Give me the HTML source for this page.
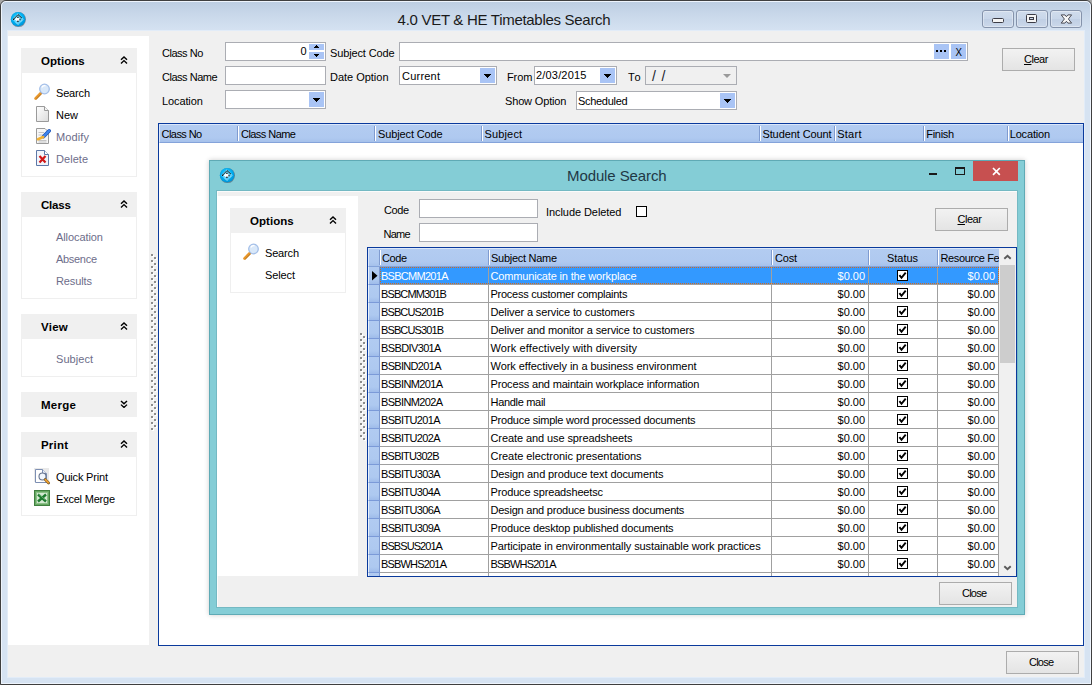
<!DOCTYPE html>
<html>
<head>
<meta charset="utf-8">
<title>4.0 VET &amp; HE Timetables Search</title>
<style>
*{box-sizing:border-box;margin:0;padding:0}
html,body{width:1092px;height:685px;overflow:hidden;background:#a8a8a8;font-family:"Liberation Sans",sans-serif;font-size:11px;color:#000}
.a{position:absolute}
.t{position:absolute;white-space:nowrap;line-height:14px;height:14px}
#win{left:0;top:0;width:1092px;height:685px;border:1px solid #3f3f3f;border-radius:6px 6px 0 0;background:linear-gradient(#bccde1 0,#c9d8ea 14px,#d6e3f2 31px,#d6e3f2 100%)}
#winhl{left:1px;top:1px;width:1090px;height:683px;border:1px solid #eef4fc;border-radius:5px 5px 0 0}
.cap{position:absolute;top:10px;height:18px;width:32px;border:1px solid #8593ab;border-radius:3px;background:linear-gradient(#d0dcec 0,#c8d6e9 50%,#c0cfe4 51%,#cbd8ea 100%);box-shadow:inset 0 0 0 1px rgba(255,255,255,.35)}
#client{left:8px;top:31px;width:1076px;height:646px;background:#f0f0f0;box-shadow:0 0 0 1px #e2ecf8}
.side{background:#fff}
.hd{position:absolute;background:#f0f0f0;height:25px}
.bd{position:absolute;border:1px solid #efefef;border-top:0;background:#fff}
.chev{position:absolute;right:9.2px;top:7.8px;width:8px;height:8.4px}
.dis{color:#6d6d8a}
.in{position:absolute;background:#fff;border:1px solid #abadb3;height:19px}
.dd{position:absolute;top:1px;right:1px;width:15px;height:15px;background:#a9c4f5}
.dd svg{position:absolute;left:4px;top:6px}
.btn{position:absolute;border:1px solid #acacac;background:linear-gradient(#f2f2f2,#e4e4e4);height:23px}
.gh{position:absolute;height:19px;background:linear-gradient(#b3ccf1 0,#afc9f0 13px,#a3bfea 18px);border-top:1px solid #dbe7fa;border-left:1px solid #dbe7fa;border-bottom:1px solid #84a3da}
.sep{position:absolute;top:3px;width:2px;height:15px;border-left:1px solid #7f9bd0;border-right:1px solid #fff}
.r{position:absolute;left:0;width:631px;height:18px}
.ri{position:absolute;left:0;top:0;width:12px;height:18px;background:linear-gradient(#b1cbf1 0,#aec9f0 12px,#9fbcea 17px);border-left:1px solid #e9f1fc;border-bottom:1px solid #7b9ad8;border-right:1px solid #7d99d0}
.c{position:absolute;top:0;height:18px;border-right:1px solid #a0a0a0;border-bottom:1px solid #a0a0a0;overflow:hidden;background:#fff}
.sel .c{background:#3399ff;color:#fff}
</style>
</head>
<body>
<div id="win" class="a"></div><div id="winhl" class="a"></div>
<div class="t" style="left:397.6px;top:13px;letter-spacing:-0.29px;font-size:15px;color:#1a1a1a;line-height:18px;height:18px;margin-top:-2px">4.0 VET &amp; HE Timetables Search</div>
<svg class="a" style="left:10px;top:11px" width="17" height="17" viewBox="0 0 17 17"><defs><radialGradient id="ai1" cx=".45" cy=".4" r=".6"><stop offset="0" stop-color="#3ad2ff"/><stop offset=".65" stop-color="#00aef0"/><stop offset="1" stop-color="#008fd2"/></radialGradient></defs><circle cx="8.5" cy="8.6" r="7.5" fill="#46505e" opacity=".55"/><circle cx="8.1" cy="8.2" r="7.3" fill="url(#ai1)"/><path d="M2.8 8.2 L8 2.8 L13.3 8.2 L8 13.6 Z" fill="rgba(255,255,255,.3)" stroke="rgba(255,255,255,.9)" stroke-width=".9" stroke-dasharray="1 .8"/><path d="M4.6 8.4 L7.8 5.6 L10.4 8.4 L7.8 10.8 Z" fill="#fff"/><path d="M3.4 8.3 L8 3.6 L11.9 7" fill="none" stroke="#111" stroke-width=".95"/><path d="M7 6.2 h1.8 M10 7.8 v1.4 M7 10.3 h1.8 M3.6 7.8 v1.2" stroke="#111" stroke-width="1.1"/></svg>
<div class="cap" style="left:982px"><svg class="a" style="left:9px;top:7px" width="12" height="6"><rect x=".5" y=".5" width="11" height="4" rx="1" fill="#f4f4f4" stroke="#3c3c46"/></svg></div>
<div class="cap" style="left:1016px"><svg class="a" style="left:9px;top:3px" width="11" height="10"><rect x=".5" y=".5" width="10" height="8" rx="1" fill="#f4f4f4" stroke="#3c3c46"/><rect x="3.5" y="3.5" width="4" height="2" fill="#c9d6e8" stroke="#3c3c46"/></svg></div>
<div class="cap" style="left:1050px"><svg class="a" style="left:9px;top:3px" width="13" height="10" viewBox="0 0 13 10"><path d="M1.2 .9 H4.9 L6.4 2.7 L7.9 .9 H11.6 L8.4 5 L11.6 9.1 H7.9 L6.4 7.3 L4.9 9.1 H1.2 L4.4 5 Z" fill="#f6f6f6" stroke="#3c3c46" stroke-width=".9"/></svg></div>
<div id="client" class="a"></div>
<div class="a side" style="left:8px;top:36px;width:141px;height:609px"></div>
<div class="hd" style="left:21px;top:48px;width:116px"><svg class="chev" viewBox="0 0 8 9" preserveAspectRatio="none"><path d="M1 4 L4 1 L7 4 M1 8 L4 5 L7 8" fill="none" stroke="#000" stroke-width="1.4"/></svg></div>
<div class="t" style="left:41px;top:54px;letter-spacing:0.04px;font-size:11.5px;font-weight:bold">Options</div>
<div class="bd" style="left:21px;top:73px;width:116px;height:104px"></div>
<div class="hd" style="left:21px;top:192px;width:116px"><svg class="chev" viewBox="0 0 8 9" preserveAspectRatio="none"><path d="M1 4 L4 1 L7 4 M1 8 L4 5 L7 8" fill="none" stroke="#000" stroke-width="1.4"/></svg></div>
<div class="t" style="left:41px;top:198px;letter-spacing:-0.22px;font-size:11.5px;font-weight:bold">Class</div>
<div class="bd" style="left:21px;top:217px;width:116px;height:82px"></div>
<div class="hd" style="left:21px;top:314px;width:116px"><svg class="chev" viewBox="0 0 8 9" preserveAspectRatio="none"><path d="M1 4 L4 1 L7 4 M1 8 L4 5 L7 8" fill="none" stroke="#000" stroke-width="1.4"/></svg></div>
<div class="t" style="left:41px;top:320px;letter-spacing:0.27px;font-size:11.5px;font-weight:bold">View</div>
<div class="bd" style="left:21px;top:339px;width:116px;height:38px"></div>
<div class="hd" style="left:21px;top:392px;width:116px"><svg class="chev" viewBox="0 0 8 9" preserveAspectRatio="none"><path d="M1 1 L4 4 L7 1 M1 5 L4 8 L7 5" fill="none" stroke="#000" stroke-width="1.4"/></svg></div>
<div class="t" style="left:41px;top:398px;letter-spacing:0.28px;font-size:11.5px;font-weight:bold">Merge</div>
<div class="hd" style="left:21px;top:432px;width:116px"><svg class="chev" viewBox="0 0 8 9" preserveAspectRatio="none"><path d="M1 4 L4 1 L7 4 M1 8 L4 5 L7 8" fill="none" stroke="#000" stroke-width="1.4"/></svg></div>
<div class="t" style="left:41px;top:438px;letter-spacing:0.2px;font-size:11.5px;font-weight:bold">Print</div>
<div class="bd" style="left:21px;top:457px;width:116px;height:59px"></div>
<div class="t" style="left:56px;top:86px;letter-spacing:-0.17px">Search</div>
<svg class="a" style="left:33px;top:83px" width="18" height="18" viewBox="0 0 18 18"><path d="M2.6 15.4 L8.2 9.8" stroke="#e8962a" stroke-width="2.8" stroke-linecap="round"/><path d="M3.2 16.2 L8.8 10.6" stroke="#9a6420" stroke-width=".7"/><circle cx="11.5" cy="6" r="4.8" fill="#d9e8f9" stroke="#a4bfe8" stroke-width="1.3"/><path d="M8.8 4.5 A3.2 3.2 0 0 1 12.5 2.8" stroke="#fff" stroke-width="1.2" fill="none"/></svg>
<div class="t" style="left:56px;top:108px;letter-spacing:-0.01px">New</div>
<svg class="a" style="left:36px;top:106px" width="13" height="16" viewBox="0 0 13 16"><defs><linearGradient id="pgn" x1="0" y1="0" x2="1" y2="1"><stop offset="0" stop-color="#fff"/><stop offset="1" stop-color="#dcdcdc"/></linearGradient></defs><path d="M.5 .5 H8.5 L12.5 4.5 V15.5 H.5 Z" fill="url(#pgn)" stroke="#9a9a9a"/><path d="M8.5 .5 V4.5 H12.5" fill="#f4f4f4" stroke="#9a9a9a"/></svg>
<div class="t" style="left:56px;top:130px;letter-spacing:0.12px;color:#6d6d8a">Modify</div>
<svg class="a" style="left:36px;top:127px" width="15" height="17" viewBox="0 0 15 17"><path d="M.5 1.5 H9 L12.5 5 V16.5 H.5 Z" fill="#f7f7f7" stroke="#9a9a9a"/><path d="M2.5 5.5 H8 M2.5 8 H7 M2.5 13.5 H10.5 M2.5 15 H10.5" stroke="#bdbdbd" stroke-width=".9"/><path d="M7.6 9.6 L13.2 3.8" stroke="#1f55b8" stroke-width="3.6" stroke-linecap="round"/><path d="M7.6 9.6 L13.2 3.8" stroke="#3f86ee" stroke-width="2.2" stroke-linecap="round"/><path d="M7.2 10 L2 12.2" stroke="#f2b233" stroke-width="2.6" stroke-linecap="round"/></svg>
<div class="t" style="left:56px;top:152px;letter-spacing:0.04px;color:#6d6d8a">Delete</div>
<svg class="a" style="left:36px;top:150px" width="13" height="16" viewBox="0 0 13 16"><path d="M.5 .5 H8.5 L12.5 4.5 V15.5 H.5 Z" fill="#f2f5fb" stroke="#5d78a8"/><path d="M8.5 .5 V4.5 H12.5" fill="#fff" stroke="#5d78a8"/><path d="M3.5 6 L9.5 12.5 M9.5 6 L3.5 12.5" stroke="#d01818" stroke-width="2.2"/></svg>
<div class="t" style="left:56px;top:230px;letter-spacing:-0.08px;color:#6d6d8a">Allocation</div>
<div class="t" style="left:56px;top:252px;letter-spacing:-0.3px;color:#6d6d8a">Absence</div>
<div class="t" style="left:56px;top:274px;letter-spacing:-0.11px;color:#6d6d8a">Results</div>
<div class="t" style="left:56px;top:352px;letter-spacing:0.05px;color:#6d6d8a">Subject</div>
<div class="t" style="left:56px;top:470px;letter-spacing:-0.18px">Quick Print</div>
<svg class="a" style="left:34px;top:468px" width="17" height="17" viewBox="0 0 17 17"><rect x="0" y="0" width="15" height="14" fill="#e9e9e9"/><path d="M1.5 1.5 H8.5 L12.5 5.5 V14.5 H1.5 Z" fill="#fff" stroke="#7d8fb3"/><path d="M8.5 1.5 V5.5 H12.5" fill="#eef2fa" stroke="#7d8fb3"/><circle cx="8.5" cy="8.5" r="3.5" fill="#f2f7fd" stroke="#66748f" stroke-width="1.1"/><path d="M11.2 11.6 L14.6 15" stroke="#7a5a2a" stroke-width="2.8" stroke-linecap="round"/><path d="M11.4 11.6 L14.4 14.6" stroke="#f0a030" stroke-width="1.6" stroke-linecap="round"/></svg>
<div class="t" style="left:56px;top:492px;letter-spacing:-0.21px">Excel Merge</div>
<svg class="a" style="left:34px;top:490px" width="16" height="16" viewBox="0 0 16 16"><rect x=".5" y=".5" width="15" height="15" fill="#66a862" stroke="#3f7f3f"/><rect x="2.5" y="2.5" width="11" height="11" fill="#d4e9d2" stroke="#8cc088"/><path d="M4 4.5 L12 11.5 M12 4.5 L4 11.5" stroke="#1d7a2e" stroke-width="2.4"/><path d="M4.5 4 L11 9.5" stroke="#7fc48a" stroke-width=".7"/></svg>
<svg class="a" style="left:151px;top:254px" width="6" height="177"><defs><pattern id="gp1" width="6" height="6" patternUnits="userSpaceOnUse"><rect x="1" y="1" width="2" height="2" fill="#fff"/><rect x="4" y="4" width="2" height="2" fill="#fff"/><rect x="0" y="0" width="2" height="2" fill="#8c8c8c"/><rect x="3" y="3" width="2" height="2" fill="#8c8c8c"/></pattern></defs><rect width="6" height="177" fill="url(#gp1)"/></svg>
<div class="t" style="left:162px;top:46px;letter-spacing:-0.48px">Class No</div>
<div class="t" style="left:162px;top:70px;letter-spacing:-0.48px">Class Name</div>
<div class="t" style="left:162px;top:94px;letter-spacing:-0.11px">Location</div>
<div class="in" style="left:225px;top:42px;width:101px"><div class="t" style="right:18.5px;top:1px">0</div><div class="a" style="right:1px;top:1px;width:15px;height:15px;background:#fff"><div class="a" style="left:0;top:0;width:15px;height:6px;background:#a9c4f5"><svg class="a" style="left:5px;top:1px" width="5" height="3" shape-rendering="crispEdges"><path d="M0 3H5L2.5 0Z" fill="#000"/></svg></div><div class="a" style="left:0;top:8px;width:15px;height:7px;background:#a9c4f5"><svg class="a" style="left:5px;top:2px" width="5" height="3" shape-rendering="crispEdges"><path d="M0 0H5L2.5 3Z" fill="#000"/></svg></div></div></div>
<div class="in" style="left:225px;top:66px;width:101px"></div>
<div class="in" style="left:225px;top:90px;width:101px"><div class="dd"><svg width="7" height="4" shape-rendering="crispEdges"><path d="M0 0H7L3.5 4Z" fill="#000"/></svg></div></div>
<div class="t" style="left:330px;top:46px;letter-spacing:-0.14px">Subject Code</div>
<div class="in" style="left:399px;top:42px;width:569px"><div class="a" style="right:18px;top:1px;width:15px;height:15px;background:#a9c4f5"><div class="a" style="left:2px;top:6px;width:2px;height:2px;background:#000;box-shadow:4px 0 #000,8px 0 #000"></div></div><div class="a" style="right:1px;top:1px;width:15px;height:15px;background:#a9c4f5;text-align:center;line-height:16px"><span style="display:inline-block;transform:scaleX(.88)">X</span></div></div>
<div class="t" style="left:330px;top:70px;letter-spacing:-0.02px">Date Option</div>
<div class="in" style="left:399px;top:66px;width:98px"><div class="dd"><svg width="7" height="4" shape-rendering="crispEdges"><path d="M0 0H7L3.5 4Z" fill="#000"/></svg></div></div>
<div class="t" style="left:402px;top:69px;letter-spacing:0.22px">Current</div>
<div class="t" style="left:507px;top:70px;letter-spacing:-0.12px">From</div>
<div class="in" style="left:534px;top:66px;width:83px"><div class="dd"><svg width="7" height="4" shape-rendering="crispEdges"><path d="M0 0H7L3.5 4Z" fill="#000"/></svg></div></div>
<div class="t" style="left:536px;top:68px;letter-spacing:0.18px">2/03/2015</div>
<div class="t" style="left:628px;top:70px;letter-spacing:0.88px">To</div>
<div class="in" style="left:645px;top:66px;width:92px;background:#f0f0f0"><div class="a" style="right:5px;top:7px;border:4px solid transparent;border-top:4px solid #9a9a9a;border-bottom:0"></div></div>
<div class="t" style="left:652px;top:69px;font-size:14px;color:#1a1a2a;letter-spacing:.85px;line-height:16px;height:16px;margin-top:-1px">/ /</div>
<div class="t" style="left:505px;top:94px;letter-spacing:-0.16px">Show Option</div>
<div class="in" style="left:576px;top:91px;width:161px"><div class="dd"><svg width="7" height="4" shape-rendering="crispEdges"><path d="M0 0H7L3.5 4Z" fill="#000"/></svg></div></div>
<div class="t" style="left:578px;top:94px;letter-spacing:-0.3px">Scheduled</div>
<div class="btn" style="left:1002px;top:48px;width:73px"></div>
<div class="t" style="left:1024px;top:52px;letter-spacing:-0.5px"><u>C</u>lear</div>
<div class="btn" style="left:1006px;top:651px;width:73px"></div>
<div class="t" style="left:1029px;top:655px;letter-spacing:-0.78px">Close</div>
<div class="a" style="left:158px;top:123px;width:926px;height:523px;border:1px solid #0a3a9c;background:#fff"></div>
<div class="gh" style="left:159px;top:124px;width:924px"></div>
<div class="t" style="left:161.6px;top:127px;letter-spacing:-0.57px">Class No</div>
<div class="sep" style="left:237px;top:126px"></div>
<div class="t" style="left:241px;top:127px;letter-spacing:-0.55px">Class Name</div>
<div class="sep" style="left:374px;top:126px"></div>
<div class="t" style="left:378px;top:127px;letter-spacing:-0.12px">Subject Code</div>
<div class="sep" style="left:481px;top:126px"></div>
<div class="t" style="left:484.5px;top:127px;letter-spacing:0.15px">Subject</div>
<div class="sep" style="left:759px;top:126px"></div>
<div class="t" style="left:762.4px;top:127px;letter-spacing:-0.09px">Student Count</div>
<div class="sep" style="left:834px;top:126px"></div>
<div class="t" style="left:837.2px;top:127px;letter-spacing:0.27px">Start</div>
<div class="sep" style="left:923px;top:126px"></div>
<div class="t" style="left:926.2px;top:127px;letter-spacing:-0.27px">Finish</div>
<div class="sep" style="left:1007px;top:126px"></div>
<div class="t" style="left:1009.7px;top:127px;letter-spacing:-0.16px">Location</div>
<div class="a" style="left:209px;top:160px;width:816px;height:455px;background:#84cdd6;border:1px solid #5faab5;box-shadow:0 0 5px rgba(0,0,0,.2)"></div>
<div class="a" style="left:217px;top:191px;width:800px;height:416px;background:#f0f0f0;box-shadow:0 0 0 1px #74b9c3;border-top:1px solid #fbfbfb;border-left:1px solid #fbfbfb"></div>
<div class="t" style="left:567px;top:169px;letter-spacing:-0.1px;font-size:15px;color:#1f3946;line-height:18px;height:18px;margin-top:-2px">Module Search</div>
<svg class="a" style="left:219px;top:167px" width="17" height="17" viewBox="0 0 17 17"><defs><radialGradient id="ai2" cx=".45" cy=".4" r=".6"><stop offset="0" stop-color="#3ad2ff"/><stop offset=".65" stop-color="#00aef0"/><stop offset="1" stop-color="#008fd2"/></radialGradient></defs><circle cx="8.5" cy="8.6" r="7.5" fill="#46505e" opacity=".55"/><circle cx="8.1" cy="8.2" r="7.3" fill="url(#ai2)"/><path d="M2.8 8.2 L8 2.8 L13.3 8.2 L8 13.6 Z" fill="rgba(255,255,255,.3)" stroke="rgba(255,255,255,.9)" stroke-width=".9" stroke-dasharray="1 .8"/><path d="M4.6 8.4 L7.8 5.6 L10.4 8.4 L7.8 10.8 Z" fill="#fff"/><path d="M3.4 8.3 L8 3.6 L11.9 7" fill="none" stroke="#111" stroke-width=".95"/><path d="M7 6.2 h1.8 M10 7.8 v1.4 M7 10.3 h1.8 M3.6 7.8 v1.2" stroke="#111" stroke-width="1.1"/></svg>
<div class="a" style="left:929px;top:173px;width:8px;height:2px;background:#1a1a1a"></div>
<div class="a" style="left:955px;top:167px;width:10px;height:8px;border:1px solid #1a1a1a;border-top-width:2px"></div>
<div class="a" style="left:973px;top:161px;width:45px;height:20px;background:#c75050"><svg class="a" style="left:18.6px;top:6.3px" width="9" height="9" viewBox="0 0 9 9"><path d="M1 1 L7.8 7.8 M7.8 1 L1 7.8" stroke="#fff" stroke-width="1.7"/></svg></div>
<div class="a side" style="left:217px;top:196px;width:141px;height:380px"></div>
<div class="hd" style="left:230px;top:208px;width:116px"><svg class="chev" viewBox="0 0 8 9" preserveAspectRatio="none"><path d="M1 4 L4 1 L7 4 M1 8 L4 5 L7 8" fill="none" stroke="#000" stroke-width="1.4"/></svg></div>
<div class="t" style="left:250px;top:214px;letter-spacing:0.04px;font-size:11.5px;font-weight:bold">Options</div>
<div class="bd" style="left:230px;top:233px;width:116px;height:60px"></div>
<div class="t" style="left:265px;top:246px;letter-spacing:-0.17px">Search</div>
<svg class="a" style="left:242px;top:243px" width="18" height="18" viewBox="0 0 18 18"><path d="M2.6 15.4 L8.2 9.8" stroke="#e8962a" stroke-width="2.8" stroke-linecap="round"/><path d="M3.2 16.2 L8.8 10.6" stroke="#9a6420" stroke-width=".7"/><circle cx="11.5" cy="6" r="4.8" fill="#d9e8f9" stroke="#a4bfe8" stroke-width="1.3"/><path d="M8.8 4.5 A3.2 3.2 0 0 1 12.5 2.8" stroke="#fff" stroke-width="1.2" fill="none"/></svg>
<div class="t" style="left:265px;top:268px;letter-spacing:-0.12px">Select</div>
<div class="t" style="left:384px;top:203px;letter-spacing:-0.43px">Code</div>
<div class="t" style="left:383.5px;top:227px;letter-spacing:-0.78px">Name</div>
<div class="in" style="left:419px;top:199px;width:119px"></div>
<div class="in" style="left:419px;top:223px;width:119px"></div>
<div class="t" style="left:546px;top:205px;letter-spacing:-0.07px">Include Deleted</div>
<div class="a" style="left:636px;top:206px;width:11px;height:11px;border:1px solid #000;background:#fff"></div>
<div class="btn" style="left:935px;top:208px;width:73px"></div>
<div class="t" style="left:957.5px;top:212px;letter-spacing:-0.5px"><u>C</u>lear</div>
<div class="btn" style="left:939px;top:582px;width:73px"></div>
<div class="t" style="left:962px;top:586px;letter-spacing:-0.78px">Close</div>
<div class="a" style="left:367px;top:247px;width:650px;height:330px;border:1px solid #0a3a9c;background:#fff;overflow:hidden">
<div class="gh" style="left:0;top:0;width:631px"></div>
<div class="sep" style="left:11px;top:2px"></div>
<div class="sep" style="left:120px;top:2px"></div>
<div class="sep" style="left:403px;top:2px"></div>
<div class="sep" style="left:500px;top:2px"></div>
<div class="sep" style="left:569px;top:2px"></div>
<div class="a" style="left:0;top:0;width:631px;height:18px;overflow:hidden">
<div class="t" style="left:14px;top:3px;letter-spacing:-0.43px">Code</div>
<div class="t" style="left:123px;top:3px;letter-spacing:-0.28px">Subject Name</div>
<div class="t" style="left:407px;top:3px;letter-spacing:-0.21px">Cost</div>
<div class="t" style="left:519px;top:3px;letter-spacing:-0.04px">Status</div>
<div class="t" style="left:572.5px;top:3px;letter-spacing:-0.38px">Resource Fe</div>
</div>
<div class="r sel" style="top:19px"><div class="ri"></div>
<div class="c" style="left:12px;width:109px"><div class="t" style="left:1px;top:2px;letter-spacing:-0.72px">BSBCMM201A</div></div>
<div class="c" style="left:121px;width:283px"><div class="t" style="left:1.5px;top:2px;letter-spacing:-0.16px">Communicate in the workplace</div></div>
<div class="c" style="left:404px;width:97px"><div class="t" style="right:3px;top:2px;letter-spacing:-0.03px">$0.00</div></div>
<div class="c" style="left:501px;width:69px"><svg class="a" style="left:28px;top:3px" width="11" height="11" viewBox="0 0 11 11"><rect x=".5" y=".5" width="10" height="10" fill="#fff" stroke="#000"/><path d="M2.4 5.2 L4.5 7.8 L8.7 2.7" fill="none" stroke="#000" stroke-width="1.9"/></svg></div>
<div class="c" style="left:570px;width:61px"><div class="t" style="right:3px;top:2px;letter-spacing:-0.03px">$0.00</div></div>
</div>
<div class="r" style="top:37px"><div class="ri"></div>
<div class="c" style="left:12px;width:109px"><div class="t" style="left:1px;top:2px;letter-spacing:-0.89px">BSBCMM301B</div></div>
<div class="c" style="left:121px;width:283px"><div class="t" style="left:1.5px;top:2px;letter-spacing:-0.26px">Process customer complaints</div></div>
<div class="c" style="left:404px;width:97px"><div class="t" style="right:3px;top:2px;letter-spacing:-0.03px">$0.00</div></div>
<div class="c" style="left:501px;width:69px"><svg class="a" style="left:28px;top:3px" width="11" height="11" viewBox="0 0 11 11"><rect x=".5" y=".5" width="10" height="10" fill="#fff" stroke="#000"/><path d="M2.4 5.2 L4.5 7.8 L8.7 2.7" fill="none" stroke="#000" stroke-width="1.9"/></svg></div>
<div class="c" style="left:570px;width:61px"><div class="t" style="right:3px;top:2px;letter-spacing:-0.03px">$0.00</div></div>
</div>
<div class="r" style="top:55px"><div class="ri"></div>
<div class="c" style="left:12px;width:109px"><div class="t" style="left:1px;top:2px;letter-spacing:-0.88px">BSBCUS201B</div></div>
<div class="c" style="left:121px;width:283px"><div class="t" style="left:1.5px;top:2px;letter-spacing:-0.11px">Deliver a service to customers</div></div>
<div class="c" style="left:404px;width:97px"><div class="t" style="right:3px;top:2px;letter-spacing:-0.03px">$0.00</div></div>
<div class="c" style="left:501px;width:69px"><svg class="a" style="left:28px;top:3px" width="11" height="11" viewBox="0 0 11 11"><rect x=".5" y=".5" width="10" height="10" fill="#fff" stroke="#000"/><path d="M2.4 5.2 L4.5 7.8 L8.7 2.7" fill="none" stroke="#000" stroke-width="1.9"/></svg></div>
<div class="c" style="left:570px;width:61px"><div class="t" style="right:3px;top:2px;letter-spacing:-0.03px">$0.00</div></div>
</div>
<div class="r" style="top:73px"><div class="ri"></div>
<div class="c" style="left:12px;width:109px"><div class="t" style="left:1px;top:2px;letter-spacing:-0.88px">BSBCUS301B</div></div>
<div class="c" style="left:121px;width:283px"><div class="t" style="left:1.5px;top:2px;letter-spacing:-0.11px">Deliver and monitor a service to customers</div></div>
<div class="c" style="left:404px;width:97px"><div class="t" style="right:3px;top:2px;letter-spacing:-0.03px">$0.00</div></div>
<div class="c" style="left:501px;width:69px"><svg class="a" style="left:28px;top:3px" width="11" height="11" viewBox="0 0 11 11"><rect x=".5" y=".5" width="10" height="10" fill="#fff" stroke="#000"/><path d="M2.4 5.2 L4.5 7.8 L8.7 2.7" fill="none" stroke="#000" stroke-width="1.9"/></svg></div>
<div class="c" style="left:570px;width:61px"><div class="t" style="right:3px;top:2px;letter-spacing:-0.03px">$0.00</div></div>
</div>
<div class="r" style="top:91px"><div class="ri"></div>
<div class="c" style="left:12px;width:109px"><div class="t" style="left:1px;top:2px;letter-spacing:-0.62px">BSBDIV301A</div></div>
<div class="c" style="left:121px;width:283px"><div class="t" style="left:1.5px;top:2px;letter-spacing:0.11px">Work effectively with diversity</div></div>
<div class="c" style="left:404px;width:97px"><div class="t" style="right:3px;top:2px;letter-spacing:-0.03px">$0.00</div></div>
<div class="c" style="left:501px;width:69px"><svg class="a" style="left:28px;top:3px" width="11" height="11" viewBox="0 0 11 11"><rect x=".5" y=".5" width="10" height="10" fill="#fff" stroke="#000"/><path d="M2.4 5.2 L4.5 7.8 L8.7 2.7" fill="none" stroke="#000" stroke-width="1.9"/></svg></div>
<div class="c" style="left:570px;width:61px"><div class="t" style="right:3px;top:2px;letter-spacing:-0.03px">$0.00</div></div>
</div>
<div class="r" style="top:109px"><div class="ri"></div>
<div class="c" style="left:12px;width:109px"><div class="t" style="left:1px;top:2px;letter-spacing:-0.68px">BSBIND201A</div></div>
<div class="c" style="left:121px;width:283px"><div class="t" style="left:1.5px;top:2px;letter-spacing:-0.05px">Work effectively in a business environment</div></div>
<div class="c" style="left:404px;width:97px"><div class="t" style="right:3px;top:2px;letter-spacing:-0.03px">$0.00</div></div>
<div class="c" style="left:501px;width:69px"><svg class="a" style="left:28px;top:3px" width="11" height="11" viewBox="0 0 11 11"><rect x=".5" y=".5" width="10" height="10" fill="#fff" stroke="#000"/><path d="M2.4 5.2 L4.5 7.8 L8.7 2.7" fill="none" stroke="#000" stroke-width="1.9"/></svg></div>
<div class="c" style="left:570px;width:61px"><div class="t" style="right:3px;top:2px;letter-spacing:-0.03px">$0.00</div></div>
</div>
<div class="r" style="top:127px"><div class="ri"></div>
<div class="c" style="left:12px;width:109px"><div class="t" style="left:1px;top:2px;letter-spacing:-0.65px">BSBINM201A</div></div>
<div class="c" style="left:121px;width:283px"><div class="t" style="left:1.5px;top:2px;letter-spacing:-0.17px">Process and maintain workplace information</div></div>
<div class="c" style="left:404px;width:97px"><div class="t" style="right:3px;top:2px;letter-spacing:-0.03px">$0.00</div></div>
<div class="c" style="left:501px;width:69px"><svg class="a" style="left:28px;top:3px" width="11" height="11" viewBox="0 0 11 11"><rect x=".5" y=".5" width="10" height="10" fill="#fff" stroke="#000"/><path d="M2.4 5.2 L4.5 7.8 L8.7 2.7" fill="none" stroke="#000" stroke-width="1.9"/></svg></div>
<div class="c" style="left:570px;width:61px"><div class="t" style="right:3px;top:2px;letter-spacing:-0.03px">$0.00</div></div>
</div>
<div class="r" style="top:145px"><div class="ri"></div>
<div class="c" style="left:12px;width:109px"><div class="t" style="left:1px;top:2px;letter-spacing:-0.65px">BSBINM202A</div></div>
<div class="c" style="left:121px;width:283px"><div class="t" style="left:1.5px;top:2px;letter-spacing:-0.31px">Handle mail</div></div>
<div class="c" style="left:404px;width:97px"><div class="t" style="right:3px;top:2px;letter-spacing:-0.03px">$0.00</div></div>
<div class="c" style="left:501px;width:69px"><svg class="a" style="left:28px;top:3px" width="11" height="11" viewBox="0 0 11 11"><rect x=".5" y=".5" width="10" height="10" fill="#fff" stroke="#000"/><path d="M2.4 5.2 L4.5 7.8 L8.7 2.7" fill="none" stroke="#000" stroke-width="1.9"/></svg></div>
<div class="c" style="left:570px;width:61px"><div class="t" style="right:3px;top:2px;letter-spacing:-0.03px">$0.00</div></div>
</div>
<div class="r" style="top:163px"><div class="ri"></div>
<div class="c" style="left:12px;width:109px"><div class="t" style="left:1px;top:2px;letter-spacing:-0.66px">BSBITU201A</div></div>
<div class="c" style="left:121px;width:283px"><div class="t" style="left:1.5px;top:2px;letter-spacing:-0.22px">Produce simple word processed documents</div></div>
<div class="c" style="left:404px;width:97px"><div class="t" style="right:3px;top:2px;letter-spacing:-0.03px">$0.00</div></div>
<div class="c" style="left:501px;width:69px"><svg class="a" style="left:28px;top:3px" width="11" height="11" viewBox="0 0 11 11"><rect x=".5" y=".5" width="10" height="10" fill="#fff" stroke="#000"/><path d="M2.4 5.2 L4.5 7.8 L8.7 2.7" fill="none" stroke="#000" stroke-width="1.9"/></svg></div>
<div class="c" style="left:570px;width:61px"><div class="t" style="right:3px;top:2px;letter-spacing:-0.03px">$0.00</div></div>
</div>
<div class="r" style="top:181px"><div class="ri"></div>
<div class="c" style="left:12px;width:109px"><div class="t" style="left:1px;top:2px;letter-spacing:-0.66px">BSBITU202A</div></div>
<div class="c" style="left:121px;width:283px"><div class="t" style="left:1.5px;top:2px;letter-spacing:-0.09px">Create and use spreadsheets</div></div>
<div class="c" style="left:404px;width:97px"><div class="t" style="right:3px;top:2px;letter-spacing:-0.03px">$0.00</div></div>
<div class="c" style="left:501px;width:69px"><svg class="a" style="left:28px;top:3px" width="11" height="11" viewBox="0 0 11 11"><rect x=".5" y=".5" width="10" height="10" fill="#fff" stroke="#000"/><path d="M2.4 5.2 L4.5 7.8 L8.7 2.7" fill="none" stroke="#000" stroke-width="1.9"/></svg></div>
<div class="c" style="left:570px;width:61px"><div class="t" style="right:3px;top:2px;letter-spacing:-0.03px">$0.00</div></div>
</div>
<div class="r" style="top:199px"><div class="ri"></div>
<div class="c" style="left:12px;width:109px"><div class="t" style="left:1px;top:2px;letter-spacing:-0.77px">BSBITU302B</div></div>
<div class="c" style="left:121px;width:283px"><div class="t" style="left:1.5px;top:2px;letter-spacing:-0.04px">Create electronic presentations</div></div>
<div class="c" style="left:404px;width:97px"><div class="t" style="right:3px;top:2px;letter-spacing:-0.03px">$0.00</div></div>
<div class="c" style="left:501px;width:69px"><svg class="a" style="left:28px;top:3px" width="11" height="11" viewBox="0 0 11 11"><rect x=".5" y=".5" width="10" height="10" fill="#fff" stroke="#000"/><path d="M2.4 5.2 L4.5 7.8 L8.7 2.7" fill="none" stroke="#000" stroke-width="1.9"/></svg></div>
<div class="c" style="left:570px;width:61px"><div class="t" style="right:3px;top:2px;letter-spacing:-0.03px">$0.00</div></div>
</div>
<div class="r" style="top:217px"><div class="ri"></div>
<div class="c" style="left:12px;width:109px"><div class="t" style="left:1px;top:2px;letter-spacing:-0.66px">BSBITU303A</div></div>
<div class="c" style="left:121px;width:283px"><div class="t" style="left:1.5px;top:2px;letter-spacing:-0.1px">Design and produce text documents</div></div>
<div class="c" style="left:404px;width:97px"><div class="t" style="right:3px;top:2px;letter-spacing:-0.03px">$0.00</div></div>
<div class="c" style="left:501px;width:69px"><svg class="a" style="left:28px;top:3px" width="11" height="11" viewBox="0 0 11 11"><rect x=".5" y=".5" width="10" height="10" fill="#fff" stroke="#000"/><path d="M2.4 5.2 L4.5 7.8 L8.7 2.7" fill="none" stroke="#000" stroke-width="1.9"/></svg></div>
<div class="c" style="left:570px;width:61px"><div class="t" style="right:3px;top:2px;letter-spacing:-0.03px">$0.00</div></div>
</div>
<div class="r" style="top:235px"><div class="ri"></div>
<div class="c" style="left:12px;width:109px"><div class="t" style="left:1px;top:2px;letter-spacing:-0.66px">BSBITU304A</div></div>
<div class="c" style="left:121px;width:283px"><div class="t" style="left:1.5px;top:2px;letter-spacing:-0.15px">Produce spreadsheetsc</div></div>
<div class="c" style="left:404px;width:97px"><div class="t" style="right:3px;top:2px;letter-spacing:-0.03px">$0.00</div></div>
<div class="c" style="left:501px;width:69px"><svg class="a" style="left:28px;top:3px" width="11" height="11" viewBox="0 0 11 11"><rect x=".5" y=".5" width="10" height="10" fill="#fff" stroke="#000"/><path d="M2.4 5.2 L4.5 7.8 L8.7 2.7" fill="none" stroke="#000" stroke-width="1.9"/></svg></div>
<div class="c" style="left:570px;width:61px"><div class="t" style="right:3px;top:2px;letter-spacing:-0.03px">$0.00</div></div>
</div>
<div class="r" style="top:253px"><div class="ri"></div>
<div class="c" style="left:12px;width:109px"><div class="t" style="left:1px;top:2px;letter-spacing:-0.66px">BSBITU306A</div></div>
<div class="c" style="left:121px;width:283px"><div class="t" style="left:1.5px;top:2px;letter-spacing:-0.22px">Design and produce business documents</div></div>
<div class="c" style="left:404px;width:97px"><div class="t" style="right:3px;top:2px;letter-spacing:-0.03px">$0.00</div></div>
<div class="c" style="left:501px;width:69px"><svg class="a" style="left:28px;top:3px" width="11" height="11" viewBox="0 0 11 11"><rect x=".5" y=".5" width="10" height="10" fill="#fff" stroke="#000"/><path d="M2.4 5.2 L4.5 7.8 L8.7 2.7" fill="none" stroke="#000" stroke-width="1.9"/></svg></div>
<div class="c" style="left:570px;width:61px"><div class="t" style="right:3px;top:2px;letter-spacing:-0.03px">$0.00</div></div>
</div>
<div class="r" style="top:271px"><div class="ri"></div>
<div class="c" style="left:12px;width:109px"><div class="t" style="left:1px;top:2px;letter-spacing:-0.66px">BSBITU309A</div></div>
<div class="c" style="left:121px;width:283px"><div class="t" style="left:1.5px;top:2px;letter-spacing:-0.19px">Produce desktop published documents</div></div>
<div class="c" style="left:404px;width:97px"><div class="t" style="right:3px;top:2px;letter-spacing:-0.03px">$0.00</div></div>
<div class="c" style="left:501px;width:69px"><svg class="a" style="left:28px;top:3px" width="11" height="11" viewBox="0 0 11 11"><rect x=".5" y=".5" width="10" height="10" fill="#fff" stroke="#000"/><path d="M2.4 5.2 L4.5 7.8 L8.7 2.7" fill="none" stroke="#000" stroke-width="1.9"/></svg></div>
<div class="c" style="left:570px;width:61px"><div class="t" style="right:3px;top:2px;letter-spacing:-0.03px">$0.00</div></div>
</div>
<div class="r" style="top:289px"><div class="ri"></div>
<div class="c" style="left:12px;width:109px"><div class="t" style="left:1px;top:2px;letter-spacing:-0.93px">BSBSUS201A</div></div>
<div class="c" style="left:121px;width:283px"><div class="t" style="left:1.5px;top:2px;letter-spacing:-0.1px">Participate in environmentally sustainable work practices</div></div>
<div class="c" style="left:404px;width:97px"><div class="t" style="right:3px;top:2px;letter-spacing:-0.03px">$0.00</div></div>
<div class="c" style="left:501px;width:69px"><svg class="a" style="left:28px;top:3px" width="11" height="11" viewBox="0 0 11 11"><rect x=".5" y=".5" width="10" height="10" fill="#fff" stroke="#000"/><path d="M2.4 5.2 L4.5 7.8 L8.7 2.7" fill="none" stroke="#000" stroke-width="1.9"/></svg></div>
<div class="c" style="left:570px;width:61px"><div class="t" style="right:3px;top:2px;letter-spacing:-0.03px">$0.00</div></div>
</div>
<div class="r" style="top:307px"><div class="ri"></div>
<div class="c" style="left:12px;width:109px"><div class="t" style="left:1px;top:2px;letter-spacing:-0.82px">BSBWHS201A</div></div>
<div class="c" style="left:121px;width:283px"><div class="t" style="left:1.5px;top:2px;letter-spacing:-0.82px">BSBWHS201A</div></div>
<div class="c" style="left:404px;width:97px"><div class="t" style="right:3px;top:2px;letter-spacing:-0.03px">$0.00</div></div>
<div class="c" style="left:501px;width:69px"><svg class="a" style="left:28px;top:3px" width="11" height="11" viewBox="0 0 11 11"><rect x=".5" y=".5" width="10" height="10" fill="#fff" stroke="#000"/><path d="M2.4 5.2 L4.5 7.8 L8.7 2.7" fill="none" stroke="#000" stroke-width="1.9"/></svg></div>
<div class="c" style="left:570px;width:61px"><div class="t" style="right:3px;top:2px;letter-spacing:-0.03px">$0.00</div></div>
</div>
<div class="r" style="top:325px"><div class="ri"></div>
<div class="c" style="left:12px;width:109px"></div>
<div class="c" style="left:121px;width:283px"></div>
<div class="c" style="left:404px;width:97px"></div>
<div class="c" style="left:501px;width:69px"></div>
<div class="c" style="left:570px;width:61px"></div>
</div>
<div class="a" style="left:12px;top:19px;width:619px;height:1px;background:repeating-linear-gradient(90deg,#d2691e 0 1px,transparent 1px 2px)"></div>
<div class="a" style="left:12px;top:35px;width:619px;height:1px;background:repeating-linear-gradient(90deg,#d2691e 0 1px,transparent 1px 2px)"></div>
<div class="a" style="left:12px;top:19px;width:1px;height:17px;background:repeating-linear-gradient(180deg,#d2691e 0 1px,transparent 1px 2px)"></div>
<div class="a" style="left:630px;top:19px;width:1px;height:17px;background:repeating-linear-gradient(180deg,#d2691e 0 1px,transparent 1px 2px)"></div>
<svg class="a" style="left:4px;top:23px" width="6" height="10" viewBox="0 0 6 10"><path d="M0 0 L5.5 4.75 L0 9.5 Z" fill="#000"/></svg>
<div class="a" style="left:631px;top:0;width:17px;height:328px;background:#f0f0f0"><div class="a" style="left:1px;top:17px;width:15px;height:98px;background:#cdcdcd"></div><svg class="a" style="left:4px;top:6px" width="9" height="6" viewBox="0 0 9 6"><path d="M1.3 4.8 L4.5 1.7 L7.7 4.8" fill="none" stroke="#5a5a5a" stroke-width="1.9"/></svg><svg class="a" style="left:4px;top:317px" width="9" height="6" viewBox="0 0 9 6"><path d="M1.3 1.2 L4.5 4.3 L7.7 1.2" fill="none" stroke="#5a5a5a" stroke-width="1.9"/></svg></div>
</div>
<svg class="a" style="left:360px;top:333px" width="6" height="108"><rect width="6" height="108" fill="url(#gp1)"/></svg>
</body>
</html>
